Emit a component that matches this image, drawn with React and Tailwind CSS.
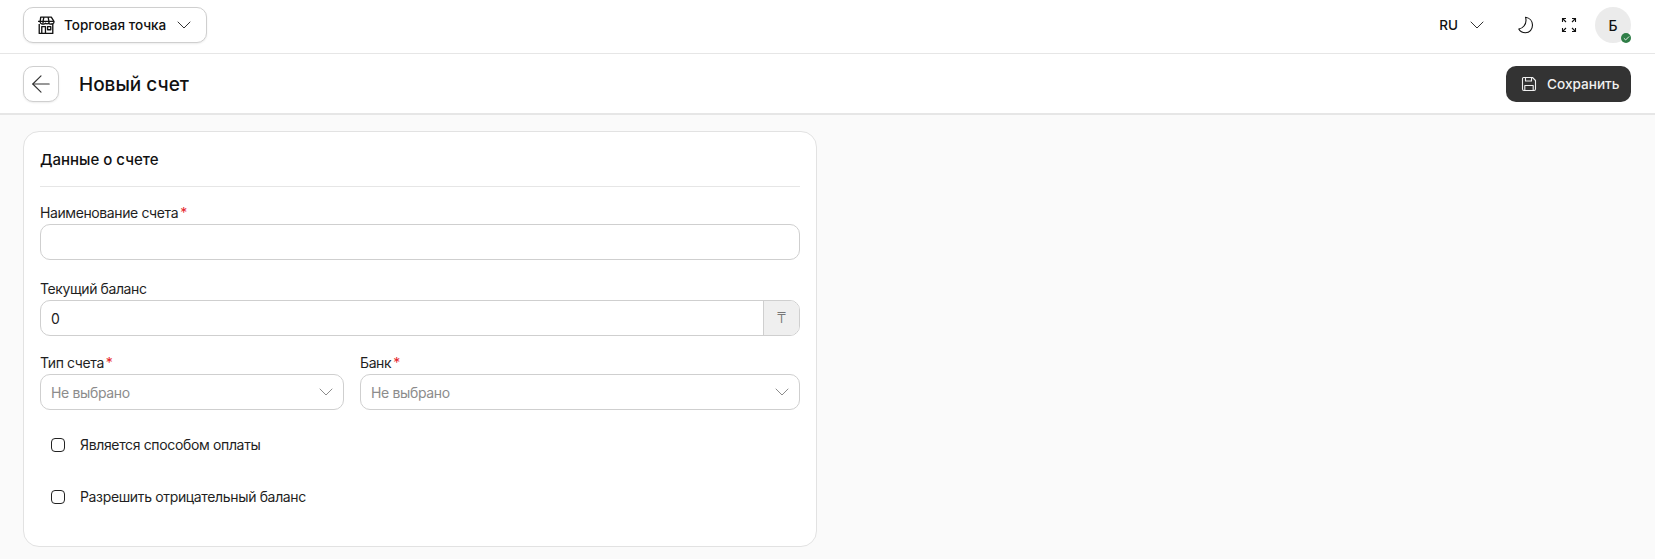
import { ArrowLeft, ChevronDown, Check } from 'lucide-react';

function StoreIcon() {
    return (
        <svg width="18" height="18" viewBox="0.5 0.5 17 17" fill="none" stroke="currentColor" strokeWidth="1.25" strokeLinejoin="round">
            <path d="M4 1.500h10l2.500 4v.6a2 2 0 0 1-2.500 1.900 2.400 2.400 0 0 1-2.500-.6 2.400 2.400 0 0 1-3 0 2.400 2.400 0 0 1-2.500.6 2 2 0 0 1-2.500-1.900v-.6z" />
            <path d="M1.500 5.500h15M7 1.500 6.200 5.500v2M11 1.500l.8 4v2" />
            <path d="M2.600 8v9h12.800V8" />
            <path d="M5 17v-6.500h3.500V17M10.500 10.500h3v3h-3z" />
        </svg>
    );
}

function MoonIcon() {
    return (
        <svg width="16" height="18" viewBox="0 0 16 18" fill="none" stroke="currentColor" strokeWidth="1.1" strokeLinejoin="round">
            <path d="M7.500 1.200C11.500 1.800 14.500 4.800 14.500 9C14.500 13.500 11.500 16.800 7.500 16.800C4.500 16.800 2 15.500.8 13C2.500 12.800 4.500 11.800 6 10C8 7.500 8.500 4.500 7.500 1.200Z" />
        </svg>
    );
}

function ExpandIcon() {
    return (
        <svg width="16" height="16" viewBox="0 0 16 16" fill="none" stroke="currentColor" strokeWidth="1.1">
            <path d="M1.500 5V1.500H5M1.500 1.500l3.500 3.500M11 1.500h3.500V5M14.500 1.500 11 5M1.500 11v3.500H5M1.500 14.500 5 11M14.500 11v3.500H11M14.500 14.500 11 11" />
        </svg>
    );
}

function SaveIcon() {
    return (
        <svg width="16" height="16" viewBox="0 0 16 16" fill="none" stroke="currentColor" strokeWidth="1.1" strokeLinejoin="round">
            <path d="M2.500 1.500h9l3 3v8.500a1.500 1.500 0 0 1-1.500 1.500H3a1.500 1.500 0 0 1-1.500-1.500V2.500a1 1 0 0 1 1-1z" />
            <path d="M4.500 1.500v3.500h6V1.500M3.800 14.500V9.500h8.400v5" />
        </svg>
    );
}

function Required() {
    return <span className="text-[#e5262a] ml-[2px]">*</span>;
}

function Field({ label, required, className, children }) {
    return (
        <div className={className}>
            <label className="block text-[14px] tracking-[-0.4px] leading-[20px] text-[#1f1f1f] mb-[1px]">
                {label}
                {required && <Required />}
            </label>
            {children}
        </div>
    );
}

function SelectBox() {
    return (
        <div className="h-[36px] rounded-[10px] border border-[#cfcfcf] bg-white flex items-center justify-between pl-[10px] pr-[5px] text-[14px] tracking-[-0.35px] text-[#8c8c8c]">
            <span>Не выбрано</span>
            <ChevronDown size={24} strokeWidth={1} className="text-[#8c8c8c]" />
        </div>
    );
}

function CheckRow({ label, className }) {
    return (
        <label className={`flex items-center pl-[11px] text-[14px] tracking-[-0.35px] leading-[20px] text-[#1f1f1f] ${className}`}>
            <span className="w-[14px] h-[14px] rounded-[4px] border border-[#222] bg-white mr-[15px]" />
            {label}
        </label>
    );
}

export default function App() {
    return (
        <div className="min-h-[559px] bg-[#fafafa] font-['Inter','Noto_Sans',sans-serif] text-[#111]">
            <header className="h-[54px] bg-white border-b border-[#e6e6e6] flex items-center justify-between pl-[23px] pr-[24px] pb-[3px]">
                <button className="h-[36px] w-[184px] rounded-[10px] border border-[#cfcfcf] bg-white shadow-[0_1px_2px_rgba(0,0,0,0.08)] flex items-center pl-[13px]">
                    <StoreIcon />
                    <span className="ml-[9px] text-[13.5px] font-medium text-[#111]">Торговая точка</span>
                    <ChevronDown size={24} strokeWidth={1} className="ml-[6px] text-[#333]" />
                </button>
                <div className="flex items-center">
                    <span className="text-[13.5px] font-medium">RU</span>
                    <ChevronDown size={24} strokeWidth={1} className="ml-[7px] text-[#333]" />
                    <span className="ml-[29px]"><MoonIcon /></span>
                    <span className="ml-[27px]"><ExpandIcon /></span>
                    <div className="relative ml-[18px] w-[36px] h-[36px] rounded-full bg-[#ebebeb] flex items-center justify-center text-[14px] font-medium">
                        Б
                        <span className="absolute right-0 bottom-0 w-[10px] h-[10px] rounded-full bg-[#2e7d46] flex items-center justify-center text-white">
                            <Check size={7} strokeWidth={3} />
                        </span>
                    </div>
                </div>
            </header>

            <div className="h-[61px] bg-white border-b-2 border-[#e6e6e6] flex items-center justify-between pl-[23px] pr-[24px] pt-[1px]">
                <div className="flex items-center">
                    <button className="w-[36px] h-[36px] rounded-[10px] border border-[#cfcfcf] bg-white shadow-[0_1px_2px_rgba(0,0,0,0.08)] flex items-center justify-center">
                        <ArrowLeft size={28} strokeWidth={1} className="text-[#333]" />
                    </button>
                    <h1 className="ml-[20px] mt-[2px] text-[19px] font-medium">Новый счет</h1>
                </div>
                <button className="h-[36px] w-[125px] rounded-[10px] bg-[#333333] text-[#f0f0f0] flex items-center pl-[15px] text-[13.6px] font-medium">
                    <SaveIcon />
                    <span className="ml-[10px] mt-[1px]">Сохранить</span>
                </button>
            </div>

            <main className="pt-[16px] pl-[23px]">
                <section className="w-[794px] h-[416px] bg-white rounded-[16px] border border-[#e2e2e2] px-[16px]">
                    <div className="h-[55px] border-b border-[#e6e6e6] flex items-center pt-[3px]">
                        <h2 className="text-[15px] font-medium">Данные о счете</h2>
                    </div>
                    <Field label="Наименование счета" required className="mt-[16px]">
                        <div className="h-[36px] rounded-[10px] border border-[#cfcfcf] bg-white" />
                    </Field>
                    <Field label="Текущий баланс" className="mt-[19px]">
                        <div className="h-[36px] rounded-[10px] border border-[#cfcfcf] bg-white flex overflow-hidden">
                            <div className="flex-1 flex items-center pl-[10px] text-[14px] text-[#222]">0</div>
                            <div className="w-[36px] bg-[#efefef] border-l border-[#cfcfcf] flex items-center justify-center text-[15px] font-light text-[#777]">₸</div>
                        </div>
                    </Field>
                    <div className="flex mt-[17px]">
                        <Field label="Тип счета" required className="w-[304px]">
                            <SelectBox />
                        </Field>
                        <Field label="Банк" required className="w-[440px] ml-[16px]">
                            <SelectBox />
                        </Field>
                    </div>
                    <CheckRow label="Является способом оплаты" className="mt-[25px]" />
                    <CheckRow label="Разрешить отрицательный баланс" className="mt-[32px]" />
                </section>
            </main>
        </div>
    );
}
